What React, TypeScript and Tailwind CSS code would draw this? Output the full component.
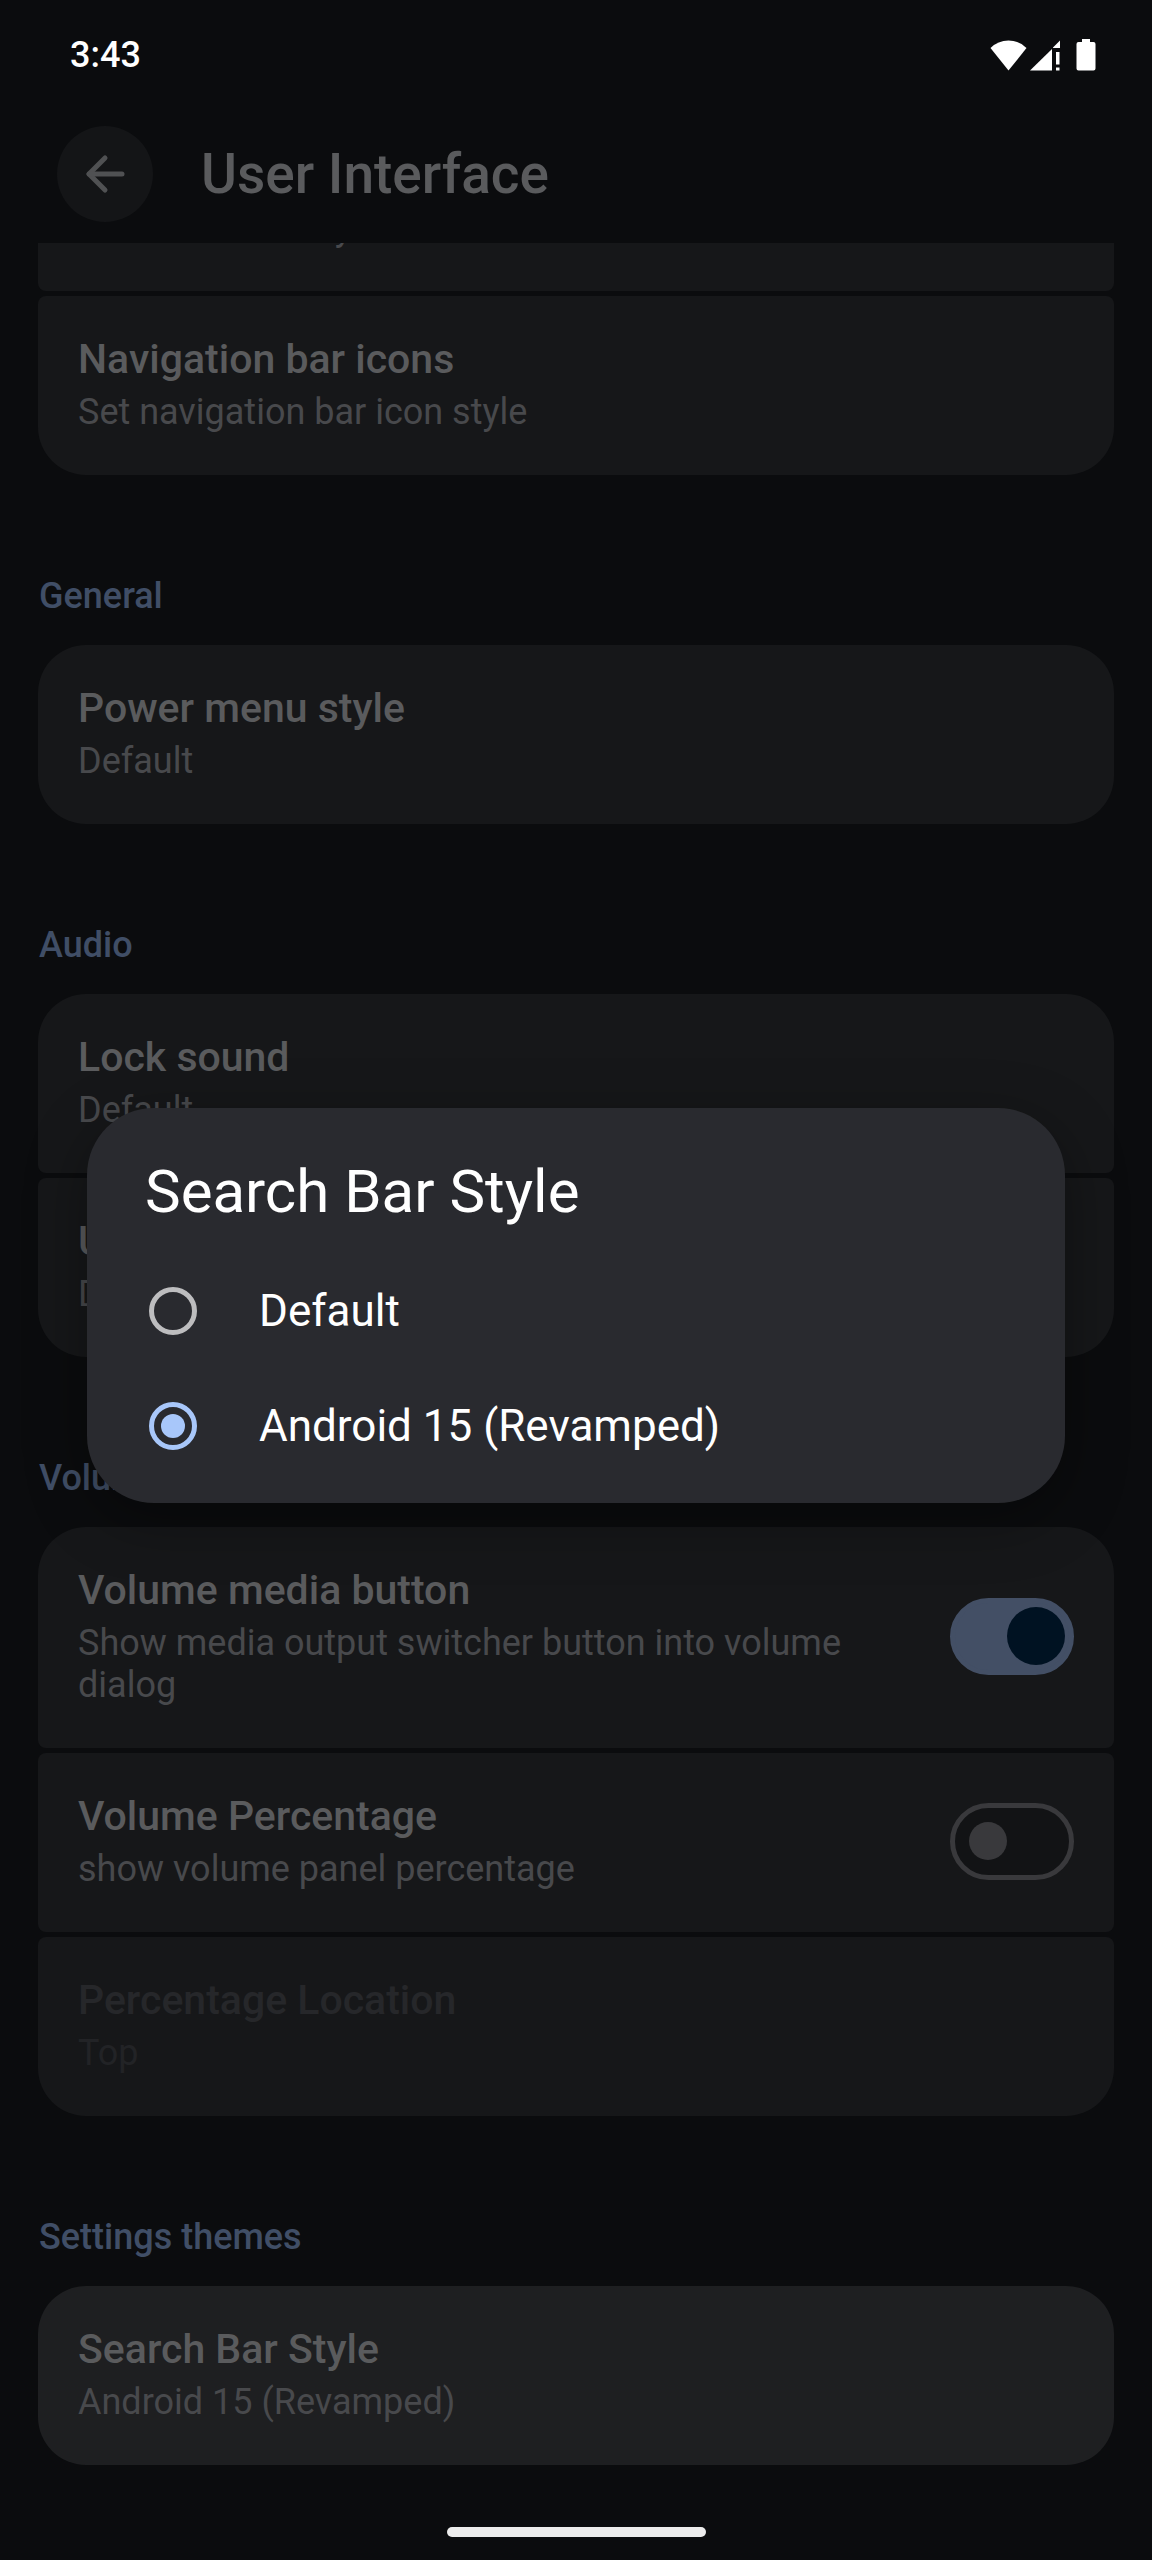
import React, { useState } from 'react'

interface SettingItem {
  id: string
  title: string
  summary: string
  kind?: 'link' | 'switch'
  enabled?: boolean
  highlighted?: boolean
}

interface SettingSection {
  title: string
  items: SettingItem[]
}

const sections: SettingSection[] = [
  {
    title: 'General',
    items: [{ id: 'power-menu', title: 'Power menu style', summary: 'Default' }]
  },
  {
    title: 'Audio',
    items: [
      { id: 'lock-sound', title: 'Lock sound', summary: 'Default' },
      { id: 'unlock-sound', title: 'Unlock sound', summary: 'Default' }
    ]
  },
  {
    title: 'Volume',
    items: [
      {
        id: 'media-button',
        title: 'Volume media button',
        summary: 'Show media output switcher button into volume dialog',
        kind: 'switch'
      },
      {
        id: 'volume-percentage',
        title: 'Volume Percentage',
        summary: 'show volume panel percentage',
        kind: 'switch'
      },
      { id: 'percentage-location', title: 'Percentage Location', summary: 'Top', enabled: false }
    ]
  },
  {
    title: 'Settings themes',
    items: [
      {
        id: 'search-bar',
        title: 'Search Bar Style',
        summary: 'Android 15 (Revamped)',
        highlighted: true
      }
    ]
  }
]

const searchBarStyles = ['Default', 'Android 15 (Revamped)']

const StatusIcons: React.FC = () => (
  <div className="flex items-end text-white">
    <svg className="w-[37px] h-[33px]" viewBox="0 0 37 33" fill="currentColor">
      <path d="M18.5 32.5 0.5 10Q8 2.5 18.5 2.5T36.5 10Z" />
    </svg>
    <svg className="w-[30px] h-[33px] ml-[3px]" viewBox="0 0 30 33" fill="currentColor">
      <path d="M0 32.5 22 11V32.5Z" />
      <path d="M23 9.500 30 2.500V10H23Z" />
      <path d="M26 14H29.500V26.500H26ZM26 29.500H29.500V32.500H26Z" />
    </svg>
    <svg className="w-[20px] h-[33px] ml-4" viewBox="0 0 20 33" fill="currentColor">
      <path d="M6 1H14V4H17.500Q19.500 4 19.500 6V30.500Q19.500 32.500 17.500 32.500H2.500Q0.500 32.500 0.500 30.500V6Q0.500 4 2.500 4H6Z" />
    </svg>
  </div>
)

const BackArrow: React.FC = () => (
  <svg className="w-10 h-10" viewBox="0 0 40 40" fill="none" stroke="currentColor" strokeWidth="5" strokeLinecap="round" strokeLinejoin="round">
    <path d="M20 4 4 20 20 36" />
    <path d="M4 20H37" />
  </svg>
)

interface SwitchProps {
  id: string
  checked: boolean
  onChange: () => void
}

const Switch: React.FC<SwitchProps> = ({ id, checked, onChange }) => (
  <span className="relative flex shrink-0 items-center w-[124px] h-[77px]">
    <input
      id={id}
      type="checkbox"
      role="switch"
      checked={checked}
      onChange={onChange}
      className="peer size-full appearance-none rounded-full border-[5px] border-[#39393c] bg-[#121315] checked:border-[#434f65] checked:bg-[#434f65]"
    />
    <span className="pointer-events-none absolute left-[19px] size-[38px] rounded-full bg-[#39393c] peer-checked:left-[57px] peer-checked:size-[58px] peer-checked:bg-[#001222]" />
  </span>
)

interface RowTextProps {
  title: string
  summary: string
  enabled?: boolean
}

const RowText: React.FC<RowTextProps> = ({ title, summary, enabled = true }) => (
  <span className="flex min-w-0 flex-1 flex-col gap-2 text-left">
    <span className={`text-[41px] leading-[48px] font-medium ${enabled ? 'text-[#5a5b5d]' : 'text-[#26272a]'}`}>
      {title}
    </span>
    <span className={`text-[36px] leading-[42px] ${enabled ? 'text-[#48494c]' : 'text-[#222326]'}`}>
      {summary}
    </span>
  </span>
)

const rowClass = 'flex w-full items-center gap-10 pt-[39px] pb-[42px] px-10'

export default function App() {
  const [switches, setSwitches] = useState<Record<string, boolean>>({
    'media-button': true,
    'volume-percentage': false
  })
  const [style, setStyle] = useState('Android 15 (Revamped)')

  const toggle = (id: string) => setSwitches((prev) => ({ ...prev, [id]: !prev[id] }))

  const renderRow = (item: SettingItem) => {
    const shape = `rounded-[8px] first:rounded-t-[48px] last:rounded-b-[48px] ${item.highlighted ? 'bg-[#1e1f21]' : 'bg-[#161719]'}`

    if (item.kind === 'switch') {
      return (
        <label key={item.id} htmlFor={item.id} className={`${rowClass} ${shape}`}>
          <RowText title={item.title} summary={item.summary} />
          <Switch id={item.id} checked={switches[item.id]} onChange={() => toggle(item.id)} />
        </label>
      )
    }

    return (
      <button key={item.id} type="button" disabled={item.enabled === false} className={`${rowClass} ${shape}`}>
        <RowText title={item.title} summary={item.summary} enabled={item.enabled} />
      </button>
    )
  }

  return (
    <div className="relative flex min-h-screen flex-col bg-[#0b0c0e] font-[Roboto,sans-serif]">
      {/* Status bar */}
      <div className="flex h-[109px] items-center justify-between pl-[70px] pr-14">
        <span className="text-[36px] leading-[42px] font-medium text-white">3:43</span>
        <StatusIcons />
      </div>

      {/* App bar */}
      <header className="flex h-[134px] items-center gap-12 px-[57px] pb-1">
        <button type="button" aria-label="Back" className="flex size-24 items-center justify-center rounded-full bg-[#141517] text-[#505153]">
          <BackArrow />
        </button>
        <h1 className="text-[55px] leading-[64px] font-medium text-[#5a5b5d]">User Interface</h1>
      </header>

      {/* Preference list, scrolled under the app bar */}
      <main className="flex flex-col px-[38px]">
        <div className="flex flex-col gap-[5px]">
          <div className="flex h-12 flex-col justify-end overflow-hidden rounded-b-[8px] bg-[#161719]">
            <button type="button" className="px-10 pb-[42px] text-left text-[36px] leading-[42px] text-[#48494c]">
              Set Wi-Fi icon style
            </button>
          </div>
          <button type="button" className={`${rowClass} rounded-t-[8px] rounded-b-[48px] bg-[#161719]`}>
            <RowText title="Navigation bar icons" summary="Set navigation bar icon style" />
          </button>
        </div>

        {sections.map((section) => (
          <section key={section.title}>
            <h2 className="pt-[100px] pb-[28px] pl-px text-[36px] leading-[42px] font-medium text-[#404e66]">
              {section.title}
            </h2>
            <div className="flex flex-col gap-[5px]">{section.items.map(renderRow)}</div>
          </section>
        ))}
      </main>

      {/* Gesture bar */}
      <footer className="mt-auto flex justify-center pb-[23px]">
        <div className="h-[10px] w-[259px] rounded-full bg-[#ececec]" />
      </footer>

      {/* Dialog */}
      <div className="absolute inset-0 flex items-center justify-center px-[87px] pt-[50px]">
        <div role="dialog" aria-labelledby="dialog-title" className="w-full rounded-[67px] bg-[#292a2f] pt-12 pb-[19px] shadow-[0_16px_60px_rgba(0,0,0,0.35)]">
          <h2 id="dialog-title" className="px-[58px] pb-[26px] text-[60px] leading-[72px] text-white">
            Search Bar Style
          </h2>
          {searchBarStyles.map((option) => (
            <label key={option} className="flex h-[115px] items-center gap-[62px] px-[62px] text-[44px] leading-[52px] text-white">
              <input
                type="radio"
                name="search-bar-style"
                value={option}
                checked={style === option}
                onChange={() => setStyle(option)}
                className="flex size-12 shrink-0 appearance-none items-center justify-center rounded-full border-[5px] border-[#bdbdbf] before:size-6 before:rounded-full checked:border-[#a8c7fa] checked:before:bg-[#a8c7fa]"
              />
              {option}
            </label>
          ))}
        </div>
      </div>
    </div>
  )
}
